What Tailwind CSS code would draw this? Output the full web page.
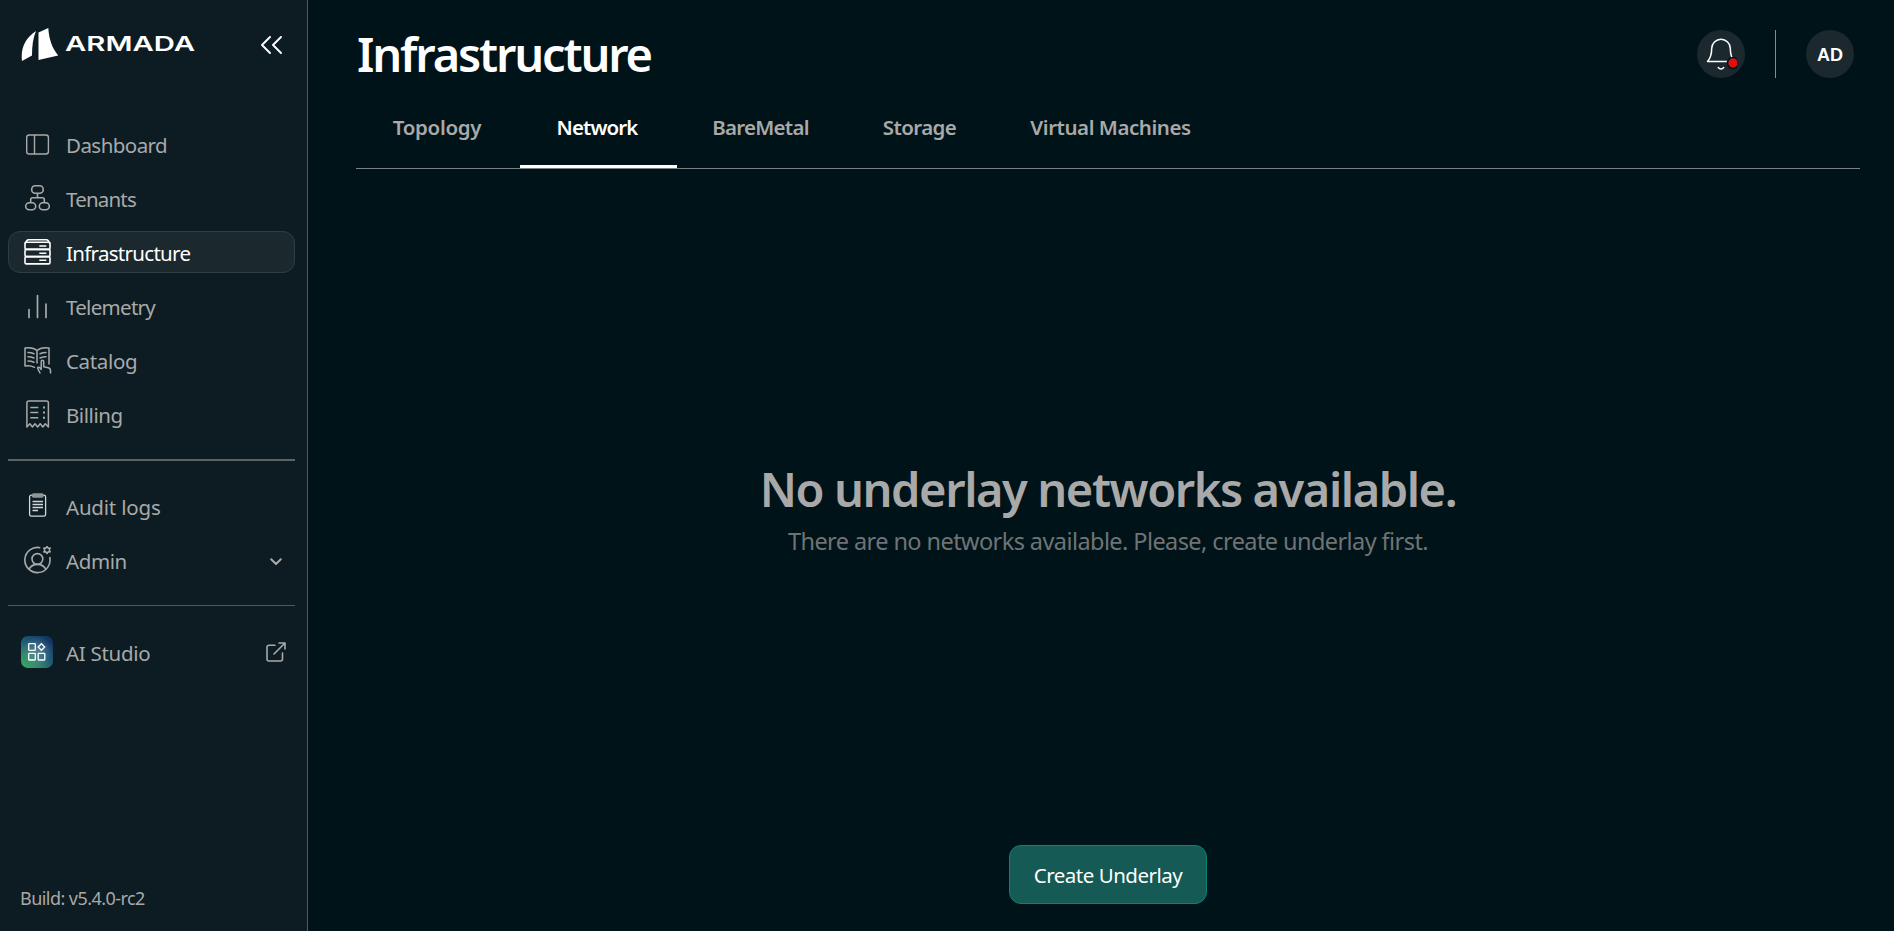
<!DOCTYPE html>
<html lang="en">
<head>
    <meta charset="UTF-8">
    <meta name="viewport" content="width=device-width, initial-scale=1.0">
    <title>Infrastructure - Armada</title>
    <script src="https://cdn.jsdelivr.net/npm/@tailwindcss/browser@4"></script>
</head>
<body class="bg-[#001318] font-['Noto_Sans','Open_Sans',sans-serif] text-[#a9a9a9]">
    <div class="flex h-screen overflow-hidden">
        <!-- Sidebar -->
        <aside class="flex w-[308px] shrink-0 flex-col border-r border-[#51595c] bg-[#0c1c22]">
            <div class="flex h-[90px] items-center justify-between pl-[21px] pr-[25px]">
                <svg class="h-[34px] w-[174px]" viewBox="0 0 174 34" fill="white">
                    <path d="M15 3C4 10-.5 21 1 33l10-5.500C11 18 12 10 15 3z"/>
                    <path d="M17.500 4.500 27.300 0C28 11 31 20 37.200 27.500L17.500 32z"/>
                    <text x="44" y="23" font-family="Inter, sans-serif" font-size="20.500" font-weight="600" textLength="130" lengthAdjust="spacingAndGlyphs">ARMADA</text>
                </svg>
                <svg class="h-[18px] w-[21px]" viewBox="0 0 21 18" fill="none" stroke="white" stroke-width="1.900" stroke-linecap="round" stroke-linejoin="round">
                    <path d="M9 1 1 9l8 8M20 1l-8 8 8 8"/>
                </svg>
            </div>

            <nav class="mt-[33px] flex flex-col gap-3 pl-2 pr-3 text-[20.500px]">
                <a class="flex h-[42px] items-center pl-4">
                    <svg class="mr-[14px] size-7" viewBox="0 0 28 28" fill="none" stroke="currentColor" stroke-width="1.400">
                        <rect x="2.700" y="5" width="21.700" height="19" rx="2.500"/>
                        <path d="M10.500 5v19"/>
                    </svg>
                    <span class="pt-[2px] tracking-[-0.55px]">Dashboard</span>
                </a>
                <a class="flex h-[42px] items-center pl-4">
                    <svg class="mr-[14px] size-7" viewBox="0 0 28 28" fill="none" stroke="currentColor" stroke-width="1.600">
                        <rect x="7.700" y="1.800" width="11.500" height="7.400" rx="3.500"/>
                        <rect x="1.700" y="18.800" width="10" height="7" rx="3.500"/>
                        <rect x="15.300" y="18.800" width="10" height="7" rx="3.500"/>
                        <path d="M13.500 9.200v4.500M6.700 18.800v-3.300c0-1.200.600-1.800 1.800-1.800h10c1.200 0 1.800.600 1.800 1.800v3.300"/>
                    </svg>
                    <span class="pt-[2px] tracking-[-0.8px]">Tenants</span>
                </a>
                <a class="flex h-[42px] items-center rounded-xl border border-[#303c41] bg-[#1b292f] pl-[15px] text-white">
                    <svg class="mr-[14px] size-7" viewBox="0 0 28 28" fill="none" stroke="currentColor" stroke-width="1.600">
                        <path d="M1 5.500 3 2.500c.400-.600.900-.800 1.500-.800h18c.600 0 1.100.200 1.500.800l2 3"/>
                        <rect x="1" y="4.200" width="25" height="7.200" rx="1.500"/>
                        <rect x="1" y="11.400" width="25" height="7.200" rx="1.500"/>
                        <rect x="1" y="18.600" width="25" height="7.300" rx="1.500"/>
                        <path d="M15.300 8h7M15.300 15.200h7M15.300 22.300h7"/>
                    </svg>
                    <span class="pt-[2px] tracking-[-0.7px]">Infrastructure</span>
                </a>
                <a class="flex h-[42px] items-center pl-4">
                    <svg class="mr-[14px] size-7" viewBox="0 0 28 28" fill="none" stroke="currentColor" stroke-width="1.700" stroke-linecap="round">
                        <path d="M5 17.500v8M13.500 3.500v22M22 12v13.500"/>
                    </svg>
                    <span class="pt-[2px] tracking-[-0.7px]">Telemetry</span>
                </a>
                <a class="flex h-[42px] items-center pl-4">
                    <svg class="mr-[14px] size-7" viewBox="0 0 28 28" fill="none" stroke="currentColor" stroke-width="1.500" stroke-linecap="round" stroke-linejoin="round">
                        <path d="M13 4.500C10.500 2.200 6 1.300 1 2v18c3.500-.500 6.500-.200 9.500 1.300M13 4.500v12.500M13 4.500c2.500-2.300 7-3.200 12-2.500v16"/>
                        <path d="M4 6.500c2 0 4 .400 6 1.300M4 10.700c2 0 4 .400 6 1.300M4 15c2 0 4 .400 6 1.300M22 6.500c-2 0-4 .400-6 1.300M22 10.700c-2 0-4 .400-6 1.300"/>
                        <path d="M16 27l-2.200-4.300c-.500-1.400 1.200-2 2-.900l1.400 1.700V15.500c0-1.600 2.500-1.600 2.500 0v5.300l4.500 1c1.500.400 2.300 1.300 2.300 2.700V27"/>
                    </svg>
                    <span class="pt-[2px] tracking-[-0.35px]">Catalog</span>
                </a>
                <a class="flex h-[42px] items-center pl-4">
                    <svg class="mr-[14px] size-7" viewBox="0 0 28 28" fill="none" stroke="currentColor" stroke-width="1.500" stroke-linejoin="round">
                        <path d="M2.900 27V3c0-1.300.700-2 2-2h17.500c1.300 0 2 .700 2 2v24l-3.100-3.300-2.500 3.300-2.600-3.300-2.600 3.300-2.600-3.300-2.600 3.300-2.500-3.300z"/>
                        <path d="M6.300 7.500h8M6.300 12.600h8M6.300 17.700h8"/>
                        <path stroke-width="2" d="M19 7.500h2M19 12.600h2M19 17.700h2"/>
                    </svg>
                    <span class="pt-[2px] tracking-[-0.45px]">Billing</span>
                </a>
            </nav>

            <div class="mr-3 ml-2 mt-6 h-0.5 bg-[#5c6263]"></div>

            <nav class="mt-6 flex flex-col gap-3 pl-2 pr-3 text-[20.500px]">
                <a class="flex h-[42px] items-center pl-4">
                    <svg class="mr-[14px] size-7" viewBox="0 0 28 28" fill="none" stroke="#d4d7d8" stroke-width="1.300">
                        <rect x="5.600" y="3.200" width="16" height="21" rx="1.800"/>
                        <rect x="8.500" y="2" width="10.500" height="3" rx="1" fill="#8f9698" stroke="#8f9698"/>
                        <path d="M8.500 9.500h10.500M8.500 12.500h10.500M8.500 15.500h10.500M8.500 18.500h5.500"/>
                    </svg>
                    <span class="pt-[2px] tracking-[-0.2px]">Audit logs</span>
                </a>
                <a class="flex h-[42px] items-center pl-4 pr-[13px]">
                    <svg class="mr-[14px] size-7" viewBox="0 0 28 28" fill="none" stroke="currentColor" stroke-width="1.600">
                        <path d="M16.300 1.700A12.600 12.600 0 1 0 25.700 11"/>
                        <circle cx="13.400" cy="13" r="5.400"/>
                        <path d="M5 23.400c1.500-3 4-5 8.400-5s6.900 2 8.400 5"/>
                        <path stroke-width="1.500" stroke-linejoin="round" d="M23 .500l1.100 1.700 2.100-.100-1 1.900 1 1.900-2.100-.100L23 7.500l-1.100-1.700-2.100.100 1-1.900-1-1.900 2.100.100z"/>
                    </svg>
                    <span class="pt-[2px] tracking-[-0.4px]">Admin</span>
                    <svg class="ml-auto mt-1 h-2 w-3" viewBox="0 0 12 8" fill="none" stroke="currentColor" stroke-width="2" stroke-linecap="round" stroke-linejoin="round">
                        <path d="m1.200 1.200 4.800 4.800 4.800-4.800"/>
                    </svg>
                </a>
            </nav>

            <div class="mr-3 ml-2 mt-6 h-px bg-[#51595c]"></div>

            <a class="mt-[25px] flex h-[42px] items-center pl-[21px] pr-[21px] text-[20.500px]">
                <svg class="mr-[13px] size-8" viewBox="0 0 32 32" fill="none">
                    <defs>
                        <linearGradient id="studio" x1="5" y1="30" x2="27" y2="2" gradientUnits="userSpaceOnUse">
                            <stop stop-color="#36a363"/>
                            <stop offset=".5" stop-color="#1f5c73"/>
                            <stop offset="1" stop-color="#123468"/>
                        </linearGradient>
                        <radialGradient id="glow">
                            <stop stop-color="white" stop-opacity=".25"/>
                            <stop offset="1" stop-color="white" stop-opacity="0"/>
                        </radialGradient>
                    </defs>
                    <rect width="32" height="32" rx="7" fill="url(#studio)"/>
                    <rect width="32" height="32" rx="7" fill="url(#glow)"/>
                    <g stroke="white" stroke-width="1.300">
                        <rect x="7.700" y="7.700" width="6.600" height="6.600" rx=".5"/>
                        <rect x="7.700" y="17.400" width="6.600" height="6.600" rx=".5"/>
                        <rect x="17.200" y="17.400" width="6.600" height="6.600" rx=".5"/>
                        <path d="M20.400 7.700 23.700 11l-3.300 3.300L17.100 11z"/>
                    </g>
                </svg>
                <span class="pt-[2px] tracking-[-0.3px]">AI Studio</span>
                <svg class="ml-auto size-5" viewBox="0 0 20 20" fill="none" stroke="currentColor" stroke-width="1.600" stroke-linecap="round" stroke-linejoin="round">
                    <path d="M9 3.300H3c-1.400 0-2 .700-2 2V17c0 1.400.700 2 2 2h11.500c1.400 0 2-.700 2-2v-6M13 1h6v6M19 1 8 12"/>
                </svg>
            </a>

            <div class="mt-auto pb-[19px] pl-5 text-lg tracking-[-0.55px]">Build: v5.4.0-rc2</div>
        </aside>

        <!-- Main -->
        <main class="flex flex-1 flex-col pl-12 pr-[34px]">
            <header class="flex h-[108px] items-center justify-between pr-[6px]">
                <h1 class="pl-px text-[47px] font-semibold tracking-[-2.150px] text-white">Infrastructure</h1>
                <div class="flex items-center">
                    <div class="flex size-12 items-center justify-center rounded-full bg-[#1b292f]">
                        <svg class="size-8" viewBox="0 0 32 32" fill="none" stroke="white" stroke-width="1.500" stroke-linecap="round" stroke-linejoin="round">
                            <path d="M2.500 23.500C6 19.500 6.700 15 6.700 10.500a9.300 9.300 0 0 1 18.600 0c0 4.500.7 9 4.200 13z"/>
                            <path d="M13.300 29.500c1.500 2 3.900 2 5.400 0"/>
                            <circle cx="28" cy="25" r="5.500" fill="#de1010" stroke="#001318"/>
                        </svg>
                    </div>
                    <div class="mx-[30px] h-12 w-px bg-[#8a8a8a]"></div>
                    <div class="flex size-12 items-center justify-center rounded-full bg-[#1b292f] pt-px font-['Liberation_Sans',Arial,sans-serif] text-lg font-bold text-white">AD</div>
                </div>
            </header>

            <div class="flex h-[61px] border-b border-[#7b8284] text-[20.500px] font-semibold">
                <a class="w-[164px] pt-1 pr-[2px] text-center tracking-[-0.3px]">Topology</a>
                <a class="w-[157px] border-b-[3px] border-white pt-1 pr-[3px] text-center tracking-[-0.9px] text-white">Network</a>
                <a class="w-[169px] pt-1 pr-[2px] text-center tracking-[-0.75px]">BareMetal</a>
                <a class="w-[148px] pt-1 pr-px text-center tracking-[-0.6px]">Storage</a>
                <a class="w-[234px] pt-1 pr-px text-center tracking-[-0.45px]">Virtual Machines</a>
            </div>

            <section class="flex flex-1 flex-col items-center pb-[27px]">
                <h2 class="mt-[288px] text-[47px] leading-[64px] font-semibold tracking-[-1.42px]">No underlay networks available.</h2>
                <p class="mt-1 text-[23.500px] leading-8 tracking-[-0.58px] text-[#6f7375]">There are no networks available. Please, create underlay first.</p>
                <button class="mt-auto h-[59px] w-[198px] rounded-xl border border-[#058577] bg-[#155a55] pt-[2px] text-[20.500px] tracking-[-0.5px] text-white">Create Underlay</button>
            </section>
        </main>
    </div>
</body>
</html>
